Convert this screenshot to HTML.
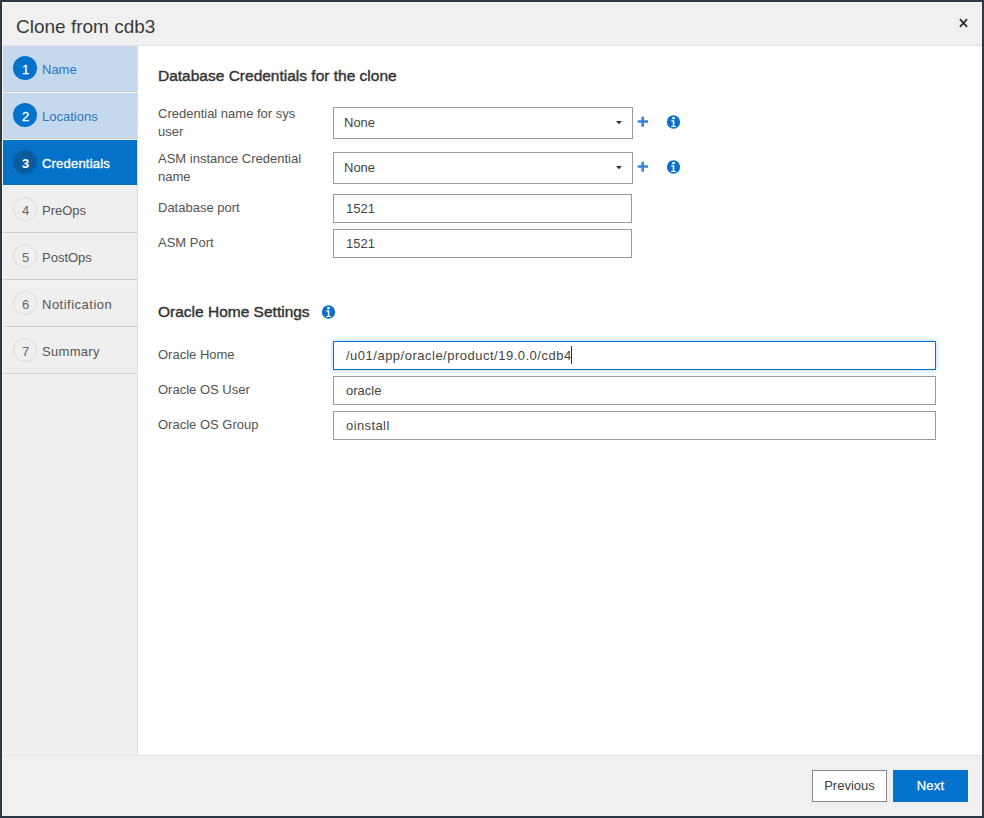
<!DOCTYPE html>
<html>
<head>
<meta charset="utf-8">
<style>
*{margin:0;padding:0;box-sizing:border-box}
html,body{width:984px;height:818px;overflow:hidden;background:#2d3748;font-family:"Liberation Sans",sans-serif}
#dlg{position:absolute;left:2px;top:2px;width:980px;height:814px;background:#f0f0f0;border-top:1px solid #fafafa;border-left:1px solid #f6f6f6}
.t{position:absolute;white-space:nowrap;line-height:20px;font-size:13px}
#hdrline{position:absolute;left:2px;top:45px;width:980px;height:1px;background:#e2e2e2}
#nav{position:absolute;left:3px;top:46px;width:134px;height:709px;background:#efefef}
#navline{position:absolute;left:137px;top:46px;width:1px;height:709px;background:#e0e0e0}
#content{position:absolute;left:138px;top:46px;width:844px;height:709px;background:#fff}
#ftrline{position:absolute;left:2px;top:755px;width:980px;height:1px;background:#e2e2e2}
.item{position:absolute;left:3px;width:134px;height:47px;border-bottom:1px solid #f4f4f4}
.item .bg{position:absolute;left:0;top:0;width:134px;height:45px}
.item .sep{position:absolute;left:0;top:45px;width:134px;height:1px;background:#cdcdcd}
.circ{position:absolute;left:10px;top:10px;width:24px;height:24px;border-radius:50%;text-align:center;line-height:27px;font-size:13px;text-indent:1px}
.done .bg{background:#c4d9ee}
.done .circ{background:#0572ce;color:#fff;-webkit-text-stroke:0.3px #fff}
.done .lbl{color:#2d74c2}
.act{border-bottom-color:#efefef}
.act .bg{background:#0572c8}
.act .sep{background:#f4f1ee}
.act .circ{background:#0a5c9f;color:#fff;font-weight:bold;font-size:13.5px}
.act .lbl{color:#fff;-webkit-text-stroke:0.35px #fff;letter-spacing:0.2px}
.todo .bg{background:#efefef}
.todo .circ{border:1px solid #dadada;color:#666;line-height:25px}
.todo .lbl{color:#555}
.lbl{position:absolute;left:39px;top:14px;font-size:13px;line-height:20px;white-space:nowrap}
.inp{position:absolute;background:#fff;border:1px solid #9a9a9a}
.lab{color:#525252}
.val{color:#444}
.h{position:absolute;white-space:nowrap;font-size:15.5px;font-weight:normal;color:#333;line-height:20px;-webkit-text-stroke:0.4px #333}
.ic{position:absolute;overflow:visible}
.btn{position:absolute;top:770px;height:32px;width:75px;text-align:center;font-size:13px;line-height:30px}
</style>
</head>
<body>
<svg width="0" height="0" style="position:absolute"><defs><g id="info"><circle cx="7.5" cy="7" r="6.65" fill="#0a70c9"/><ellipse cx="7.5" cy="3.2" rx="1.5" ry="1.1" fill="#fff"/><path d="M5.3 5.3H8.3V11H10V12.1H5V11H6.8V6.5H5.3Z" fill="#fff"/></g></defs></svg>
<div id="dlg"></div>
<div class="t" style="left:16px;top:15px;font-size:19px;line-height:24px;color:#3a3a3a">Clone from cdb3</div>
<svg style="position:absolute;left:959px;top:18px" width="9" height="10" viewBox="0 0 9 10"><path d="M0.9 1.2L8.1 8.9M8.1 1.2L0.9 8.9" stroke="#2a2a2a" stroke-width="1.7"/></svg>
<div id="hdrline"></div>
<div id="nav"></div>
<div id="navline"></div>
<div id="content"></div>
<div id="ftrline"></div>

<div class="item done" style="top:46px"><div class="bg"></div><div class="sep"></div><div class="circ">1</div><div class="lbl">Name</div></div>
<div class="item done" style="top:93px"><div class="bg"></div><div class="sep"></div><div class="circ">2</div><div class="lbl">Locations</div></div>
<div class="item act" style="top:140px"><div class="bg"></div><div class="sep"></div><div class="circ">3</div><div class="lbl">Credentials</div></div>
<div class="item todo" style="top:187px"><div class="bg"></div><div class="sep"></div><div class="circ">4</div><div class="lbl">PreOps</div></div>
<div class="item todo" style="top:234px"><div class="bg"></div><div class="sep"></div><div class="circ">5</div><div class="lbl">PostOps</div></div>
<div class="item todo" style="top:281px"><div class="bg"></div><div class="sep"></div><div class="circ">6</div><div class="lbl" style="letter-spacing:0.5px">Notification</div></div>
<div class="item todo" style="top:328px"><div class="bg"></div><div class="sep"></div><div class="circ">7</div><div class="lbl" style="letter-spacing:0.3px">Summary</div></div>

<div class="h" style="left:158px;top:66px">Database Credentials for the clone</div>

<div class="t lab" style="left:158px;top:104px">Credential name for sys</div>
<div class="t lab" style="left:158px;top:122px">user</div>
<div class="inp" style="left:333px;top:107px;width:300px;height:32px"></div>
<div class="t val" style="left:344px;top:113px">None</div>
<svg class="ic" style="left:616px;top:121px" width="6" height="4"><path d="M0 0H6L3 3.2Z" fill="#333"/></svg>
<svg class="ic" style="left:637px;top:116px" width="12" height="12"><path d="M5.7 0.8V10.8M0.7 5.5H11.1" stroke="#3a86d2" stroke-width="2.7"/></svg>
<svg class="ic" style="left:666px;top:115px" width="15" height="15"><use href="#info"/></svg>

<div class="t lab" style="left:158px;top:149px">ASM instance Credential</div>
<div class="t lab" style="left:158px;top:167px">name</div>
<div class="inp" style="left:333px;top:152px;width:300px;height:32px"></div>
<div class="t val" style="left:344px;top:158px">None</div>
<svg class="ic" style="left:616px;top:166px" width="6" height="4"><path d="M0 0H6L3 3.2Z" fill="#333"/></svg>
<svg class="ic" style="left:637px;top:161px" width="12" height="12"><path d="M5.7 0.8V10.8M0.7 5.5H11.1" stroke="#3a86d2" stroke-width="2.7"/></svg>
<svg class="ic" style="left:666px;top:160px" width="15" height="15"><use href="#info"/></svg>

<div class="t lab" style="left:158px;top:198px">Database port</div>
<div class="inp" style="left:333px;top:194px;width:299px;height:29px"></div>
<div class="t val" style="left:346px;top:199px">1521</div>

<div class="t lab" style="left:158px;top:233px">ASM Port</div>
<div class="inp" style="left:333px;top:229px;width:299px;height:29px"></div>
<div class="t val" style="left:346px;top:234px">1521</div>

<div class="h" style="left:158px;top:302px">Oracle Home Settings</div>
<svg class="ic" style="left:321px;top:305px" width="15" height="15"><use href="#info"/></svg>

<div class="t lab" style="left:158px;top:345px">Oracle Home</div>
<div class="inp" style="left:333px;top:341px;width:603px;height:29px;border-color:#0572ce;box-shadow:0 0 5px rgba(5,114,206,.35)"></div>
<div class="t val" style="left:346px;top:346px;letter-spacing:0.5px">/u01/app/oracle/product/19.0.0/cdb4</div>
<div style="position:absolute;left:571px;top:346px;width:1px;height:18px;background:#333"></div>

<div class="t lab" style="left:158px;top:380px">Oracle OS User</div>
<div class="inp" style="left:333px;top:376px;width:603px;height:29px"></div>
<div class="t val" style="left:346px;top:381px">oracle</div>

<div class="t lab" style="left:158px;top:415px">Oracle OS Group</div>
<div class="inp" style="left:333px;top:411px;width:603px;height:29px"></div>
<div class="t val" style="left:346px;top:416px;letter-spacing:0.4px">oinstall</div>

<div class="btn" style="left:812px;background:#fff;border:1px solid #8a8a8a;color:#3d3d3d">Previous</div>
<div class="btn" style="left:893px;background:#0572ce;color:#fff;line-height:32px;-webkit-text-stroke:0.25px #fff;letter-spacing:0.15px">Next</div>
</body>
</html>
